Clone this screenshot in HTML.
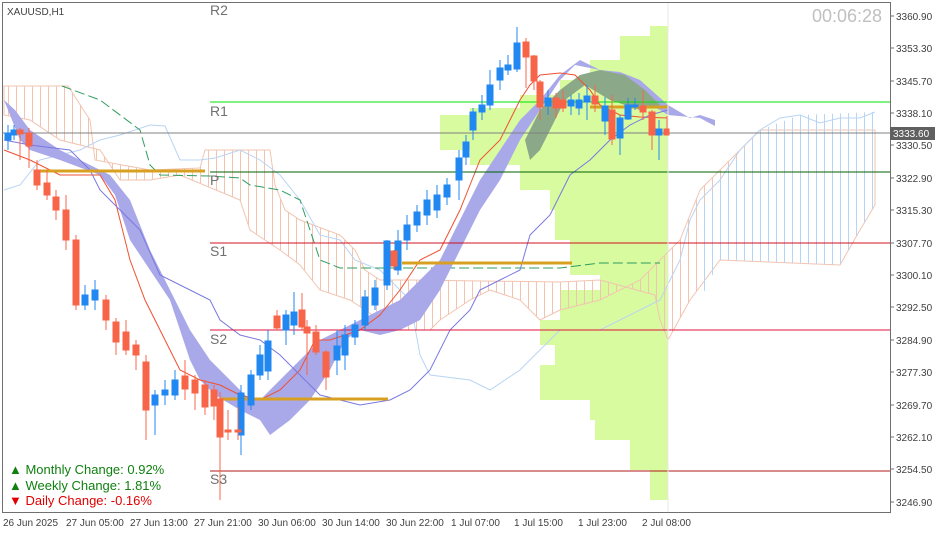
<!DOCTYPE html><html><head><style>
body{margin:0;background:#fff;width:937px;height:534px;overflow:hidden;font-family:"Liberation Sans",sans-serif}
svg{position:absolute;left:0;top:0}
</style></head><body>
<svg width="937" height="534" xmlns="http://www.w3.org/2000/svg" font-family="Liberation Sans, sans-serif">
<defs>
<pattern id="hp" width="8" height="10" patternUnits="userSpaceOnUse"><line x1="0.5" y1="0" x2="0.5" y2="10" stroke="#f2c4b0" stroke-width="1"/></pattern>
<pattern id="hb" width="8" height="10" patternUnits="userSpaceOnUse"><line x1="0.5" y1="0" x2="0.5" y2="10" stroke="#b8d4f4" stroke-width="1"/></pattern>
</defs>
<!-- volume profile -->
<polygon fill="#d8fba0" points="668,26 650,26 650,36 620,36 620,60 590,60 590,80 560,80 560,95 520,95 520,108 470,108 470,115 440,115 440,150 470,150 470,165 520,165 520,190 550,190 550,210 555,210 555,240 570,240 570,275 600,275 600,290 560,290 560,320 540,320 540,345 555,345 555,365 540,365 540,400 590,400 590,420 595,420 595,440 630,440 630,470 650,470 650,500 668,500"/>
<!-- kumo clouds -->
<polygon fill="url(#hp)" stroke="#f2c4b0" points="4,86 68,86 90,120 95,160 150,170 200,168 205,150 240,150 270,150 275,185 285,210 300,220 340,235 355,250 365,270 380,280 410,280 560,282 600,280 655,295 660,320 668,340 690,300 720,260 840,265 860,230 875,205 875,130 760,130 700,190 680,240 640,280 600,300 560,310 540,320 520,300 490,290 470,300 440,320 430,330 400,330 380,320 350,300 320,290 300,265 280,250 250,230 240,200 180,175 150,180 120,180 100,150 60,140 30,120 4,115"/>
<polyline fill="none" stroke="#b8d4f4" points="4,190 20,185 40,160 80,150 100,140 120,135 150,125 165,126 180,160 200,160 215,158 240,150 260,160 280,175 300,200 320,235 340,240 355,260 380,270 410,300 420,355 430,375 470,380 490,390 520,370 560,330 600,330 620,320 640,310 660,300 680,260 690,220 700,200 720,180 740,150 760,130 780,118 800,115 820,123 840,118 860,118 875,112"/>
<polygon fill="url(#hb)" points="700,210 720,180 760,130 800,115 875,112 875,205 860,230 840,265 720,260 700,300"/>
<!-- dashed green -->
<polyline fill="none" stroke="#2e9e5e" stroke-dasharray="10,4" points="62,86 100,100 140,130 150,165 160,175 210,176 240,178 250,185 280,190 300,200 320,260 340,268 380,268 420,268 560,268 600,263 660,263"/>
<!-- purple ribbon -->
<polygon fill="#a9a8e8" points="4,100 20,140 30,150 60,160 100,175 115,195 130,240 150,270 170,300 190,360 200,380 215,395 240,410 260,420 270,435 290,420 310,400 330,370 345,340 360,330 380,335 400,330 420,320 440,290 460,250 480,210 500,180 520,140 540,110 560,80 575,65 600,70 620,80 640,100 660,110 668,115 700,118 715,126 715,120 700,115 690,118 668,105 640,80 620,72 600,70 580,60 560,75 540,100 520,120 500,150 480,180 460,220 440,260 420,280 400,300 380,310 360,320 340,330 320,340 300,360 280,380 260,400 250,400 230,380 210,360 190,330 170,290 150,250 130,200 110,175 90,165 60,150 30,130 15,110"/>
<polygon fill="#8ba888" points="540,110 560,90 580,75 600,70 625,75 645,90 660,105 640,110 610,100 585,85 565,100 550,130 540,150 530,160 525,140"/>
<!-- indicator lines -->
<polyline fill="none" stroke="#f05030" stroke-width="1" points="4,150 30,160 60,175 100,175 115,200 130,260 145,300 160,330 180,370 200,380 220,385 240,395 260,400 280,390 300,370 315,340 330,340 360,330 380,315 400,290 420,260 440,250 460,210 470,185 480,160 500,140 510,120 520,100 530,85 540,75 560,73 575,75 590,90 600,105 620,115 640,117 668,118"/>
<polyline fill="none" stroke="#7a78e0" stroke-width="1" points="4,140 30,145 70,150 90,170 100,190 120,210 140,230 160,275 190,290 210,300 220,320 240,335 260,340 280,355 300,375 320,395 360,405 390,400 410,390 430,370 450,330 470,310 480,290 500,280 520,270 530,235 550,215 560,195 570,175 590,160 610,140 630,125 650,115 668,110"/>
<!-- orange support/resistance -->
<g stroke="#d8a020" stroke-width="3"><line x1="40" y1="171" x2="205" y2="171"/><line x1="220" y1="399" x2="388" y2="399"/><line x1="402" y1="263" x2="572" y2="263"/><line x1="590" y1="107" x2="668" y2="107"/></g>
<!-- pivot lines -->
<line x1="210" y1="102" x2="890" y2="102" stroke="#00e000"/>
<line x1="2" y1="133" x2="890" y2="133" stroke="#808080"/>
<line x1="210" y1="172" x2="890" y2="172" stroke="#006000"/>
<line x1="210" y1="243" x2="890" y2="243" stroke="#d01020"/>
<line x1="210" y1="330" x2="890" y2="330" stroke="#e0103c"/>
<line x1="210" y1="471" x2="890" y2="471" stroke="#b01818"/>
<line x1="668" y1="2" x2="668" y2="512" stroke="#e8e8e8"/>
<!-- candles -->
<g stroke-width="1">
<g stroke="#2088f0" fill="#2088f0">
<line x1="8" y1="125" x2="8" y2="150"/><rect x="5" y="133" width="6" height="7"/>
<line x1="14" y1="125" x2="14" y2="140"/><rect x="11" y="130" width="6" height="5"/>
<line x1="85" y1="285" x2="85" y2="310"/><rect x="82" y="295" width="6" height="10"/>
<line x1="95" y1="280" x2="95" y2="310"/><rect x="92" y="290" width="6" height="10"/>
<line x1="155" y1="390" x2="155" y2="435"/><rect x="152" y="395" width="6" height="10"/>
<line x1="165" y1="380" x2="165" y2="405"/><rect x="162" y="390" width="6" height="5"/>
<line x1="175" y1="370" x2="175" y2="400"/><rect x="172" y="380" width="6" height="15"/>
<line x1="241" y1="385" x2="241" y2="455"/><rect x="238" y="393" width="6" height="42"/>
<line x1="251" y1="370" x2="251" y2="410"/><rect x="248" y="375" width="6" height="30"/>
<line x1="260" y1="345" x2="260" y2="380"/><rect x="257" y="355" width="6" height="20"/>
<line x1="268" y1="330" x2="268" y2="380"/><rect x="265" y="341" width="6" height="30"/>
<line x1="286" y1="310" x2="286" y2="345"/><rect x="283" y="315" width="6" height="15"/>
<line x1="294" y1="292" x2="294" y2="335"/><rect x="291" y="312" width="6" height="13"/>
<line x1="337" y1="330" x2="337" y2="375"/><rect x="334" y="346" width="6" height="14"/>
<line x1="345" y1="325" x2="345" y2="370"/><rect x="342" y="335" width="6" height="20"/>
<line x1="355" y1="320" x2="355" y2="345"/><rect x="352" y="325" width="6" height="12"/>
<line x1="365" y1="290" x2="365" y2="330"/><rect x="362" y="297" width="6" height="28"/>
<line x1="375" y1="280" x2="375" y2="310"/><rect x="372" y="288" width="6" height="17"/>
<line x1="387" y1="240" x2="387" y2="290"/><rect x="384" y="241" width="6" height="44"/>
<line x1="398" y1="230" x2="398" y2="275"/><rect x="395" y="241" width="6" height="29"/>
<line x1="407" y1="215" x2="407" y2="250"/><rect x="404" y="225" width="6" height="15"/>
<line x1="417" y1="205" x2="417" y2="232"/><rect x="414" y="212" width="6" height="13"/>
<line x1="427" y1="190" x2="427" y2="225"/><rect x="424" y="200" width="6" height="15"/>
<line x1="437" y1="185" x2="437" y2="218"/><rect x="434" y="195" width="6" height="15"/>
<line x1="447" y1="178" x2="447" y2="205"/><rect x="444" y="185" width="6" height="12"/>
<line x1="459" y1="150" x2="459" y2="200"/><rect x="456" y="158" width="6" height="22"/>
<line x1="466" y1="135" x2="466" y2="165"/><rect x="463" y="142" width="6" height="15"/>
<line x1="473" y1="108" x2="473" y2="140"/><rect x="470" y="112" width="6" height="18"/>
<line x1="482" y1="95" x2="482" y2="120"/><rect x="479" y="105" width="6" height="7"/>
<line x1="490" y1="70" x2="490" y2="110"/><rect x="487" y="85" width="6" height="20"/>
<line x1="500" y1="60" x2="500" y2="90"/><rect x="497" y="68" width="6" height="12"/>
<line x1="508" y1="55" x2="508" y2="75"/><rect x="505" y="65" width="6" height="5"/>
<line x1="517" y1="27" x2="517" y2="72"/><rect x="514" y="43" width="6" height="26"/>
<line x1="548" y1="90" x2="548" y2="115"/><rect x="545" y="98" width="6" height="8"/>
<line x1="571" y1="95" x2="571" y2="115"/><rect x="568" y="100" width="6" height="6"/>
<line x1="579" y1="93" x2="579" y2="115"/><rect x="576" y="100" width="6" height="8"/>
<line x1="587" y1="85" x2="587" y2="120"/><rect x="584" y="96" width="6" height="6"/>
<line x1="605" y1="97" x2="605" y2="135"/><rect x="602" y="106" width="6" height="15"/>
<line x1="620" y1="115" x2="620" y2="155"/><rect x="617" y="118" width="6" height="20"/>
<line x1="628" y1="98" x2="628" y2="120"/><rect x="625" y="105" width="6" height="14"/>
<line x1="635" y1="98" x2="635" y2="110"/><rect x="632" y="105" width="6" height="2"/>
<line x1="659" y1="120" x2="659" y2="160"/><rect x="656" y="129" width="6" height="6"/>
</g>
<g stroke="#f86448" fill="#f86448">
<line x1="20" y1="128" x2="20" y2="160"/><rect x="17" y="130" width="6" height="4"/>
<line x1="29" y1="128" x2="29" y2="168"/><rect x="26" y="133" width="6" height="13"/>
<line x1="37" y1="160" x2="37" y2="190"/><rect x="34" y="170" width="6" height="15"/>
<line x1="47" y1="170" x2="47" y2="200"/><rect x="44" y="183" width="6" height="12"/>
<line x1="56" y1="190" x2="56" y2="220"/><rect x="53" y="197" width="6" height="13"/>
<line x1="66" y1="195" x2="66" y2="250"/><rect x="63" y="210" width="6" height="30"/>
<line x1="76" y1="235" x2="76" y2="310"/><rect x="73" y="240" width="6" height="65"/>
<line x1="106" y1="295" x2="106" y2="330"/><rect x="103" y="300" width="6" height="20"/>
<line x1="116" y1="318" x2="116" y2="355"/><rect x="113" y="322" width="6" height="20"/>
<line x1="126" y1="320" x2="126" y2="355"/><rect x="123" y="332" width="6" height="18"/>
<line x1="136" y1="340" x2="136" y2="370"/><rect x="133" y="345" width="6" height="10"/>
<line x1="146" y1="355" x2="146" y2="440"/><rect x="143" y="362" width="6" height="48"/>
<line x1="185" y1="360" x2="185" y2="400"/><rect x="182" y="376" width="6" height="13"/>
<line x1="195" y1="375" x2="195" y2="410"/><rect x="192" y="380" width="6" height="13"/>
<line x1="205" y1="380" x2="205" y2="415"/><rect x="202" y="385" width="6" height="22"/>
<line x1="214" y1="385" x2="214" y2="420"/><rect x="211" y="390" width="6" height="16"/>
<line x1="220" y1="392" x2="220" y2="500"/><rect x="217" y="399" width="6" height="38"/>
<line x1="228" y1="410" x2="228" y2="440"/><rect x="225" y="430" width="6" height="2"/>
<line x1="238" y1="407" x2="238" y2="440"/><rect x="235" y="430" width="6" height="2"/>
<line x1="277" y1="310" x2="277" y2="330"/><rect x="274" y="316" width="6" height="12"/>
<line x1="302" y1="293" x2="302" y2="330"/><rect x="299" y="310" width="6" height="17"/>
<line x1="307" y1="320" x2="307" y2="375"/><rect x="304" y="327" width="6" height="6"/>
<line x1="316" y1="325" x2="316" y2="355"/><rect x="313" y="332" width="6" height="20"/>
<line x1="326" y1="350" x2="326" y2="390"/><rect x="323" y="352" width="6" height="25"/>
<line x1="394" y1="250" x2="394" y2="270"/><rect x="391" y="251" width="6" height="15"/>
<line x1="526" y1="38" x2="526" y2="88"/><rect x="523" y="42" width="6" height="15"/>
<line x1="534" y1="55" x2="534" y2="90"/><rect x="531" y="56" width="6" height="25"/>
<line x1="540" y1="80" x2="540" y2="120"/><rect x="537" y="82" width="6" height="25"/>
<line x1="556" y1="93" x2="556" y2="118"/><rect x="553" y="98" width="6" height="10"/>
<line x1="563" y1="90" x2="563" y2="112"/><rect x="560" y="100" width="6" height="8"/>
<line x1="595" y1="85" x2="595" y2="112"/><rect x="592" y="96" width="6" height="8"/>
<line x1="612" y1="95" x2="612" y2="145"/><rect x="609" y="110" width="6" height="29"/>
<line x1="643" y1="90" x2="643" y2="120"/><rect x="640" y="106" width="6" height="6"/>
<line x1="652" y1="110" x2="652" y2="150"/><rect x="649" y="112" width="6" height="23"/>
<line x1="667" y1="116" x2="667" y2="135"/><rect x="664" y="129" width="5" height="6"/>
</g>
</g>
<!-- frame -->
<rect x="2.5" y="2.5" width="888" height="510" fill="none" stroke="#707070"/>
<rect x="890" y="127" width="45" height="13" fill="#606060"/>
<text x="893" y="137" font-size="10" fill="#fff">3333.60</text>
<g font-size="10" fill="#404040">
<text x="896" y="20">3360.90</text><text x="896" y="52">3353.30</text><text x="896" y="85">3345.70</text><text x="896" y="117">3338.10</text><text x="896" y="149">3330.50</text><text x="896" y="182">3322.90</text><text x="896" y="214">3315.30</text><text x="896" y="247">3307.70</text><text x="896" y="279">3300.10</text><text x="896" y="311">3292.50</text><text x="896" y="344">3284.90</text><text x="896" y="376">3277.30</text><text x="896" y="409">3269.70</text><text x="896" y="441">3262.10</text><text x="896" y="473">3254.50</text><text x="896" y="506">3246.90</text>
</g>
<g stroke="#707070"><line x1="890" y1="16" x2="894" y2="16"/><line x1="890" y1="48" x2="894" y2="48"/><line x1="890" y1="81" x2="894" y2="81"/><line x1="890" y1="113" x2="894" y2="113"/><line x1="890" y1="145" x2="894" y2="145"/><line x1="890" y1="178" x2="894" y2="178"/><line x1="890" y1="210" x2="894" y2="210"/><line x1="890" y1="243" x2="894" y2="243"/><line x1="890" y1="275" x2="894" y2="275"/><line x1="890" y1="307" x2="894" y2="307"/><line x1="890" y1="340" x2="894" y2="340"/><line x1="890" y1="372" x2="894" y2="372"/><line x1="890" y1="405" x2="894" y2="405"/><line x1="890" y1="437" x2="894" y2="437"/><line x1="890" y1="469" x2="894" y2="469"/><line x1="890" y1="502" x2="894" y2="502"/></g>
<g font-size="10" fill="#404040">
<text x="3" y="526">26 Jun 2025</text><text x="66" y="526">27 Jun 05:00</text><text x="130" y="526">27 Jun 13:00</text><text x="194" y="526">27 Jun 21:00</text><text x="258" y="526">30 Jun 06:00</text><text x="322" y="526">30 Jun 14:00</text><text x="386" y="526">30 Jun 22:00</text><text x="451" y="526">1 Jul 07:00</text><text x="514" y="526">1 Jul 15:00</text><text x="578" y="526">1 Jul 23:00</text><text x="642" y="526">2 Jul 08:00</text>
</g>
<text x="7" y="15" font-size="10" fill="#404040">XAUUSD,H1</text>
<text x="812" y="22" font-size="18" fill="#c0c0c0">00:06:28</text>
<g font-size="14" fill="#707070"><text x="210" y="15">R2</text><text x="210" y="116">R1</text><text x="210" y="185">P</text><text x="210" y="256">S1</text><text x="210" y="344">S2</text><text x="210" y="484">S3</text></g>
<g font-size="13"><text x="9" y="474" fill="#108010">▲ Monthly Change: 0.92%</text><text x="9" y="490" fill="#108010">▲ Weekly Change: 1.81%</text><text x="9" y="505" fill="#e00000">▼ Daily Change: -0.16%</text></g>
</svg>
</body></html>
